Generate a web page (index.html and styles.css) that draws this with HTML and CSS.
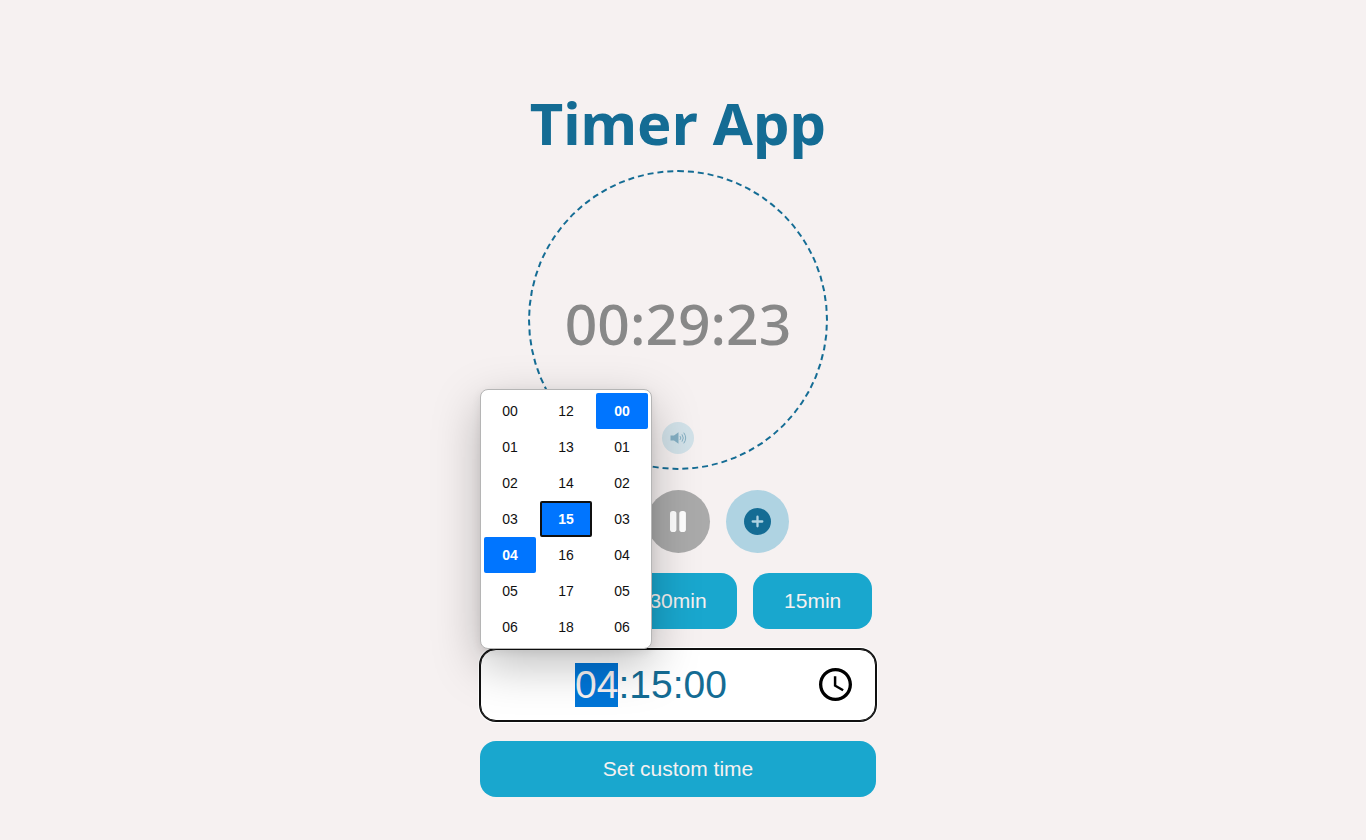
FILE: index.html
```html
<!DOCTYPE html>
<html lang="en">
<head>
<meta charset="utf-8">
<title>Timer App</title>
<link rel="stylesheet" href="styles.css">
</head>
<body>
<main class="app">
  <h1 class="title">Timer App</h1>
  <section class="dial">
    <time class="remaining">00:29:23</time>
    <button class="sound" type="button" aria-label="Toggle sound">
      <svg viewBox="0 0 17 14" width="17" height="14" fill="none" stroke="currentColor" stroke-linecap="round">
        <path d="M.5 4.6H4L8.5 1.2v11.6L4 9.4H.5z" fill="currentColor" stroke="none"/>
        <path d="M10.3 5.4q1.4 1.6 0 3.2M12.2 3.7q2.4 3.3 0 6.6M14 2q3.6 5 0 10"/>
      </svg>
    </button>
  </section>
  <div class="controls">
    <button class="round" type="button" aria-label="Remove a minute">
      <svg viewBox="0 0 27 27" width="27" height="27"><circle cx="13.5" cy="13.5" r="13.5" fill="#146c94"/><path d="M8.7 13.5h9.6" stroke="#afd3e2" stroke-width="2.3" stroke-linecap="round"/></svg>
    </button>
    <button class="round round-pause" type="button" aria-label="Pause">
      <svg viewBox="0 0 17 21" width="17" height="21"><rect x="0" y="0" width="6.4" height="21" rx="2.8" fill="#fff"/><rect x="9.3" y="0" width="6.6" height="21" rx="2.8" fill="#fff"/></svg>
    </button>
    <button class="round" type="button" aria-label="Add a minute">
      <svg viewBox="0 0 27 27" width="27" height="27"><circle cx="13.5" cy="13.5" r="13.5" fill="#146c94"/><path d="M8.7 13.5h9.6M13.5 8.7v9.6" stroke="#afd3e2" stroke-width="2.3" stroke-linecap="round"/></svg>
    </button>
  </div>
  <div class="presets">
    <button class="btn" type="button" aria-label="45 minutes"></button>
    <button class="btn" type="button">30min</button>
    <button class="btn" type="button">15min</button>
  </div>
  <div class="field">
    <input class="field-input" id="custom" type="text" value="04:15:00" aria-label="Custom time" autocomplete="off">
    <button class="field-clock" type="button" aria-label="Show time picker">
      <svg viewBox="2 2 20 20" width="33" height="33"><path d="M11.99 2C6.47 2 2 6.48 2 12s4.47 10 9.99 10C17.52 22 22 17.52 22 12S17.52 2 11.99 2zM12 20c-4.42 0-8-3.58-8-8s3.58-8 8-8 8 3.58 8 8-3.58 8-8 8zm.5-13H11v6l5.25 3.15.75-1.23-4.5-2.67z"/></svg>
    </button>
    <div class="picker">
      <div class="col">
        <button class="cell" type="button">00</button>
        <button class="cell" type="button">01</button>
        <button class="cell" type="button">02</button>
        <button class="cell" type="button">03</button>
        <button class="cell is-selected" type="button">04</button>
        <button class="cell" type="button">05</button>
        <button class="cell" type="button">06</button>
      </div>
      <div class="col">
        <button class="cell" type="button">12</button>
        <button class="cell" type="button">13</button>
        <button class="cell" type="button">14</button>
        <button class="cell is-selected is-focused" type="button">15</button>
        <button class="cell" type="button">16</button>
        <button class="cell" type="button">17</button>
        <button class="cell" type="button">18</button>
      </div>
      <div class="col">
        <button class="cell is-selected" type="button">00</button>
        <button class="cell" type="button">01</button>
        <button class="cell" type="button">02</button>
        <button class="cell" type="button">03</button>
        <button class="cell" type="button">04</button>
        <button class="cell" type="button">05</button>
        <button class="cell" type="button">06</button>
      </div>
    </div>
  </div>
  <button class="btn btn-wide" type="button">Set custom time</button>
</main>
<script src="app.js"></script>
</body>
</html>
```
FILE: styles.css
```css
* { box-sizing: border-box; }
body {
  margin: 0;
  padding: 83px 10px 40px 0;
  background: #f6f1f1;
  color: #146c94;
  font-family: "Noto Sans", sans-serif;
}
button { border: 0; padding: 0; font-family: "Liberation Sans", Arial, sans-serif; cursor: pointer; }
svg { display: block; }
.app {
  display: flex;
  flex-direction: column;
  align-items: center;
  gap: 20px;
  width: 100%;
  max-width: 396px;
  margin: 0 auto;
}
.title {
  margin: 0 0 -13px;
  font-size: 58px;
  line-height: 80px;
  font-weight: 700;
  white-space: nowrap;
}
.dial {
  display: grid;
  grid-template-rows: 121px 60px 1fr;
  justify-items: center;
  align-items: center;
  width: 300px;
  height: 300px;
  border: 2px dashed #146c94;
  border-radius: 50%;
}
.remaining { grid-row: 2; font-size: 57px; line-height: 60px; font-weight: 500; color: #888; }
.sound {
  grid-row: 3;
  display: grid;
  place-items: center;
  align-self: end;
  width: 32px;
  height: 32px;
  margin-bottom: 14px;
  border-radius: 50%;
  background: #d2e2e9;
  color: #84afc3;
}
.controls { display: flex; gap: 16px; }
.presets {
  display: grid;
  grid-template-columns: repeat(3, 1fr);
  gap: 16px;
  width: 100%;
  padding: 0 4px;
}
.round {
  display: grid;
  place-items: center;
  width: 63px;
  height: 63px;
  border-radius: 50%;
  background: #afd3e2;
}
.round-pause { background: #aaa; }
.btn {
  padding: 16px 0;
  border-radius: 16px;
  background: #19a7ce;
  color: #f6f1f1;
  font-size: 21px;
  line-height: 24px;
}
.btn-wide { width: 100%; }
.field {
  position: relative;
  display: flex;
  align-items: center;
  width: 100%;
  height: 72px;
  padding: 0 23px 2px 16px;
  border: 1px solid #101010;
  border-radius: 16px;
  background: #fff;
  box-shadow: 0 0 0 1px #101010, 0 0 0 2px #fff;
}
.field-input {
  flex: 1;
  min-width: 0;
  padding: 1px 0 0;
  border: 0;
  outline: 0;
  background: none;
  color: #146c94;
  font: 39px "Liberation Sans", Arial, sans-serif;
  text-align: center;
}
.field-input::selection { background: #0075d7; color: #f6f1f1; }
.field-clock { margin-left: 14px; background: none; }
.picker {
  position: absolute;
  left: -1px;
  bottom: calc(100% + 1px);
  display: flex;
  gap: 4px;
  padding: 3px;
  border: 1px solid #b5b5b5;
  border-radius: 8px;
  background: #fff;
  box-shadow: 0 16px 48px rgba(0, 0, 0, 0.26), 0 3px 10px rgba(0, 0, 0, 0.08);
}
.col { display: flex; flex-direction: column; }
.cell {
  width: 52px;
  height: 36px;
  border-radius: 2px;
  background: #fff;
  color: #101010;
  font-size: 14px;
}
.is-selected { background: #0075ff; color: #fff; font-weight: 700; }
.is-focused { border: 2px solid #101010; }
```
FILE: app.js
```js
const input = document.getElementById("custom");
input.focus();
input.setSelectionRange(0, 2);
```
